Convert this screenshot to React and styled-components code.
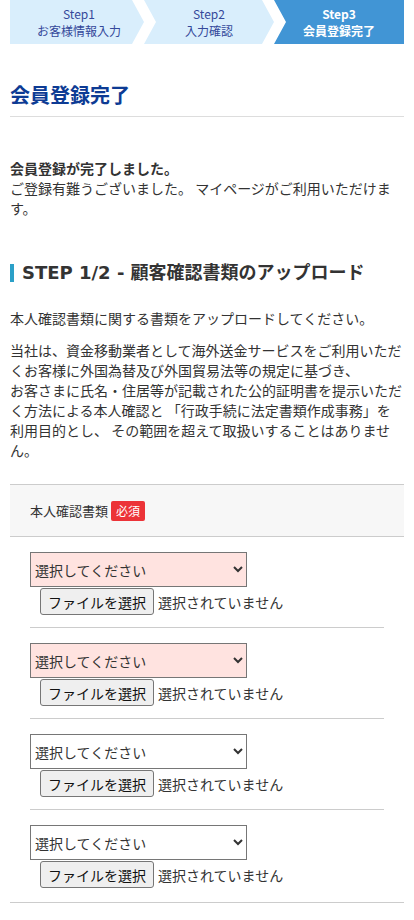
import React from "react";
import styled, { createGlobalStyle } from "styled-components";

const GlobalStyle = createGlobalStyle`
  body {
    margin: 0;
    background: #fff;
    color: #333;
    font-family: "Noto Sans CJK JP", "Noto Sans", sans-serif;
  }
  * { box-sizing: border-box; }
`;

const Page = styled.div`
  padding: 0 10px;
`;

const Steps = styled.div`
  display: flex;
  height: 44px;
`;

const arrowFirst =
  "polygon(0 0, calc(100% - 12px) 0, 100% 50%, calc(100% - 12px) 100%, 0 100%)";
const arrowMid =
  "polygon(0 0, calc(100% - 12px) 0, 100% 50%, calc(100% - 12px) 100%, 0 100%, 12px 50%)";
const arrowLast = "polygon(0 0, 100% 0, 100% 100%, 0 100%, 12px 50%)";

const Step = styled.div`
  flex: 1;
  display: flex;
  flex-direction: column;
  align-items: center;
  justify-content: center;
  padding-left: ${p => (p.$pos === "first" ? "4px" : "0")};
  font-size: 12px;
  line-height: 17px;
  background: ${p => (p.$active ? "#4195d5" : "#d9eefc")};
  color: ${p => (p.$active ? "#fff" : "#34489a")};
  font-weight: ${p => (p.$active ? 700 : 400)};
  clip-path: ${p =>
    p.$pos === "first" ? arrowFirst : p.$pos === "last" ? arrowLast : arrowMid};
`;

const Title = styled.h1`
  margin: 37px 0 0;
  padding-bottom: 7px;
  font-size: 20px;
  line-height: 28px;
  font-weight: 700;
  color: #0d3b94;
  border-bottom: 1px solid #ddd;
`;

const Message = styled.p`
  margin: 41px 0 0;
  font-size: 14px;
  line-height: 20px;
  strong {
    font-weight: 700;
  }
`;

const SectionHead = styled.h2`
  margin: 43px 0 0;
  display: flex;
  align-items: center;
  gap: 8px;
  font-family: "DejaVu Sans", "Noto Sans CJK JP", sans-serif;
  font-size: 18px;
  line-height: 24px;
  font-weight: 700;
  color: #333;
  &::before {
    content: "";
    width: 4px;
    height: 18px;
    background: #2ba0c8;
  }
`;

const Para = styled.p`
  margin: ${p => p.$top || "12px"} 0 0;
  font-size: 14px;
  line-height: 20px;
`;

const FormBox = styled.div`
  margin-top: 24px;
  border-top: 1px solid #ccc;
  border-bottom: 1px solid #ccc;
`;

const FormHead = styled.div`
  display: flex;
  align-items: center;
  gap: 3px;
  height: 52px;
  padding: 0 20px;
  background: #f7f7f7;
  border-bottom: 1px solid #ccc;
  font-size: 13px;
`;

const Badge = styled.span`
  display: inline-flex;
  align-items: center;
  height: 20px;
  padding: 0 5px;
  border-radius: 2px;
  background: #ec3338;
  color: #fff;
  font-size: 12px;
`;

const Rows = styled.div`
  padding: 0 20px;
`;

const Row = styled.div`
  padding: 15px 0 12px;
  border-bottom: 1px solid #ccc;
  &:last-child {
    border-bottom: none;
    padding-bottom: 14px;
  }
`;

const Select = styled.select`
  display: block;
  width: 217px;
  height: 35px;
  margin: 0;
  font-family: inherit;
  font-size: 14px;
  color: #333;
  background-color: ${p => (p.$error ? "#ffe3e0" : "#fff")};
  border: 1px solid #767676;
  border-radius: 0;
`;

const FileLine = styled.div`
  display: flex;
  align-items: center;
  gap: 4px;
  margin-top: 1px;
  padding-left: 10px;
  font-size: 14px;
  color: #333;
`;

const FileButton = styled.button`
  height: 27px;
  padding: 0 7px;
  font-family: inherit;
  font-size: 14px;
  color: #111;
  background: #efefef;
  border: 1px solid #767676;
  border-radius: 3px;
`;

const uploads = [true, true, false, false];

export default function App() {
  return (
    <>
      <GlobalStyle />
      <Page>
        <Steps>
          <Step $pos="first">
            <span>Step1</span>
            <span>お客様情報入力</span>
          </Step>
          <Step $pos="mid">
            <span>Step2</span>
            <span>入力確認</span>
          </Step>
          <Step $pos="last" $active>
            <span>Step3</span>
            <span>会員登録完了</span>
          </Step>
        </Steps>

        <Title>会員登録完了</Title>

        <Message>
          <strong>会員登録が完了しました。</strong>
          <br />
          ご登録有難うございました。 マイページがご利用いただけます。
        </Message>

        <SectionHead>STEP 1/2 - 顧客確認書類のアップロード</SectionHead>

        <Para $top="23px">本人確認書類に関する書類をアップロードしてください。</Para>
        <Para>
          当社は、資金移動業者として海外送金サービスをご利用いただくお客様に外国為替及び外国貿易法等の規定に基づき、
          <br />
          お客さまに氏名・住居等が記載された公的証明書を提示いただく方法による本人確認と 「行政手続に法定書類作成事務」を利用目的とし、 その範囲を超えて取扱いすることはありません。
        </Para>

        <FormBox>
          <FormHead>
            本人確認書類
            <Badge>必須</Badge>
          </FormHead>
          <Rows>
            {uploads.map((error, i) => (
              <Row key={i}>
                <Select $error={error} defaultValue="">
                  <option value="">選択してください</option>
                </Select>
                <FileLine>
                  <FileButton type="button">ファイルを選択</FileButton>
                  <span>選択されていません</span>
                </FileLine>
              </Row>
            ))}
          </Rows>
        </FormBox>
      </Page>
    </>
  );
}
